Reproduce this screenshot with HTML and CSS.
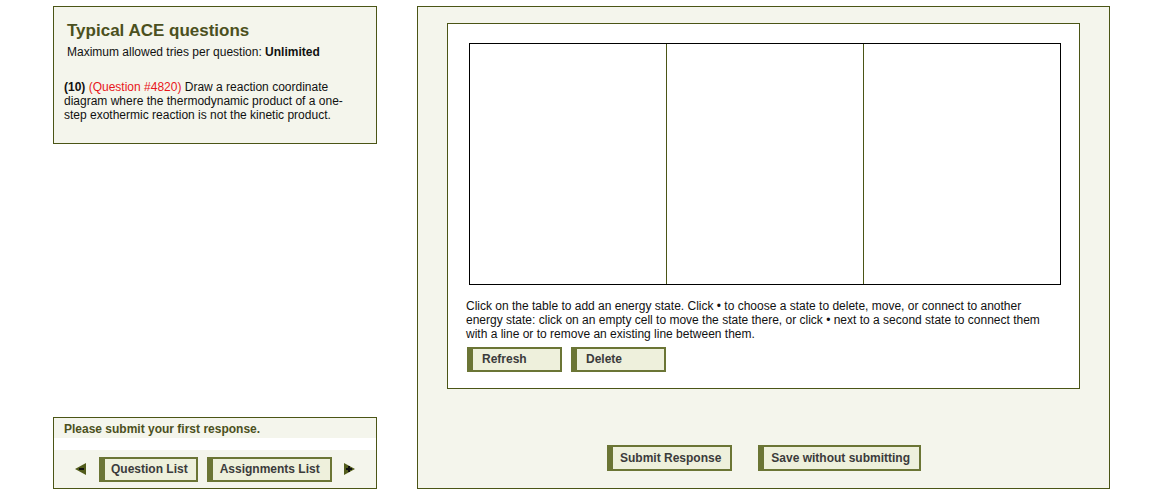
FILE: index.html
```html
<!DOCTYPE html>
<html>
<head>
<meta charset="utf-8">
<link rel="stylesheet" href="styles.css">
</head>
<body>
<div class="page">
  <div class="left">
    <div class="qbox">
      <h1 class="title">Typical ACE questions</h1>
      <div class="tries">Maximum allowed tries per question: <b>Unlimited</b></div>
      <p class="qtext"><b>(10)</b>&nbsp;<span class="qnum">(Question #4820)</span> Draw a reaction coordinate diagram where the thermodynamic product of a one-step exothermic reaction is not the kinetic product.</p>
    </div>
    <div class="navbox">
      <div class="navhead">Please submit your first response.</div>
      <div class="navgap"></div>
      <div class="navrow">
        <svg class="arrow" width="12" height="12" viewBox="0 0 12 12"><polygon points="0,6 11,0 11,12" fill="#525c1c"/><rect x="4" y="5" width="5" height="2" fill="#111"/></svg>
        <span class="btn">Question List</span>
        <span class="btn wide">Assignments List</span>
        <svg class="arrow" width="12" height="12" viewBox="0 0 12 12"><polygon points="12,6 1,0 1,12" fill="#525c1c"/><rect x="3" y="5" width="6" height="2" fill="#111"/><rect x="5" y="3" width="2" height="6" fill="#111"/></svg>
      </div>
    </div>
  </div>
  <div class="main">
    <div class="work">
      <div class="grid">
        <div class="cell"></div>
        <div class="cell"></div>
        <div class="cell"></div>
      </div>
      <p class="help">Click on the table to add an energy state. Click &bull; to choose a state to delete, move, or connect to another energy state: click on an empty cell to move the state there, or click &bull; next to a second state to connect them with a line or to remove an existing line between them.</p>
      <div class="tools">
        <span class="btn fixed">Refresh</span>
        <span class="btn fixed">Delete</span>
      </div>
    </div>
    <div class="submit">
      <span class="btn tall">Submit Response</span>
      <span class="btn tall">Save without submitting</span>
    </div>
  </div>
</div>
</body>
</html>
```
FILE: styles.css
```css
html, body {
  margin: 0;
  padding: 0;
  background: #fff;
  font-family: "Liberation Sans", Arial, Helvetica, sans-serif;
  font-size: 12px;
  color: #111;
}
.page {
  display: flex;
  gap: 40px;
  padding: 6px 0 0 53px;
}
.left {
  width: 324px;
  height: 483px;
  display: flex;
  flex-direction: column;
  justify-content: space-between;
}
.qbox {
  box-sizing: border-box;
  height: 138px;
  border: 1px solid #4b5516;
  background: #f4f5ec;
  padding: 13px 13px 0 12px;
}
.title {
  margin: 0;
  font-size: 17px;
  line-height: 22px;
  font-weight: bold;
  color: #4b5020;
  padding-left: 1px;
}
.tries {
  margin-top: 2px;
  line-height: 16px;
  padding-left: 1px;
}
.qtext {
  margin: 20px 0 0 -2px;
  line-height: 14px;
  padding-right: 14px;
}
.qnum { color: #e8161b; }
.navbox {
  box-sizing: border-box;
  height: 72px;
  border: 1px solid #4b5516;
  background: #f4f5ec;
}
.navhead {
  height: 20px;
  line-height: 22px;
  padding-left: 10px;
  font-weight: bold;
  color: #4b5020;
}
.navgap {
  height: 12px;
  background: #fff;
}
.navrow {
  display: flex;
  align-items: center;
  height: 38px;
  padding-left: 21px;
  gap: 9px;
}
.navrow .arrow:first-child { margin-right: 3px; }
.navrow .arrow:last-child { margin-left: 2px; }
.navrow .btn { padding: 0 8px 0 6px; }
.navrow .btn.wide { padding: 0 10px 0 7px; }
.btn {
  display: inline-block;
  box-sizing: border-box;
  height: 25px;
  line-height: 21px;
  border: 2px solid #6b7535;
  border-left-width: 6px;
  background: #eef0dc;
  color: #3b3b3b;
  font-weight: bold;
  font-size: 12px;
  padding: 0 9px 0 7px;
  white-space: nowrap;
}
.btn.tall {
  height: 26px;
  line-height: 22px;
}
.btn.fixed {
  width: 95px;
  padding-left: 9px;
}
.main {
  box-sizing: border-box;
  width: 693px;
  height: 483px;
  border: 1px solid #4b5516;
  background: #f4f5ec;
  padding: 16px 0 0 29px;
}
.work {
  box-sizing: border-box;
  width: 633px;
  height: 366px;
  border: 1px solid #4b5516;
  background: #fff;
  padding: 19px 0 0 21px;
}
.grid {
  box-sizing: border-box;
  width: 592px;
  height: 242px;
  border: 1px solid #000;
  display: grid;
  grid-template-columns: 196px 197px 1fr;
}
.cell + .cell { border-left: 1px solid #4b5516; }
.help {
  margin: 14px 0 0 -3px;
  line-height: 14px;
  width: 580px;
}
.tools {
  margin: 6px 0 0 -2px;
  display: flex;
  gap: 9px;
}
.submit {
  display: flex;
  justify-content: center;
  gap: 26px;
  margin: 56px 0 0 -28px;
}
```
